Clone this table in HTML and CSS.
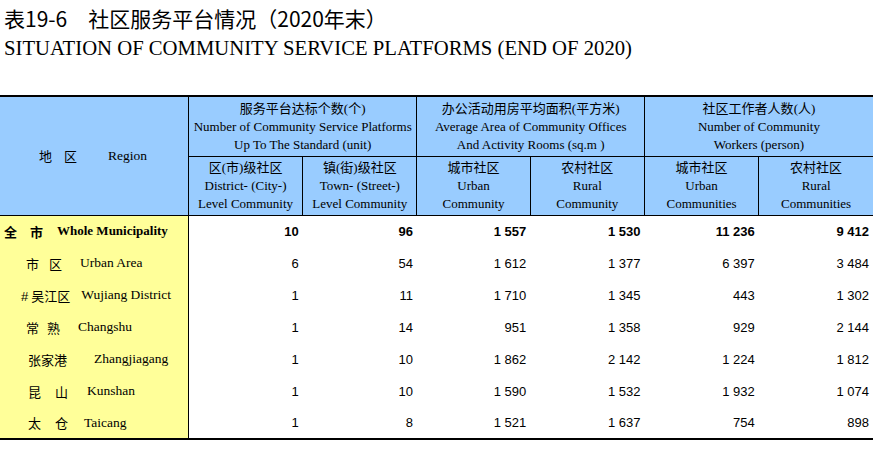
FILE: index.html
```html
<!DOCTYPE html>
<html lang="zh-CN">
<head>
<meta charset="utf-8">
<title>表19-6 社区服务平台情况</title>
<link rel="stylesheet" href="styles.css">
</head>
<body>
<h1 class="title-cn">表19-6　社区服务平台情况（2020年末）</h1>
<h2 class="title-en">SITUATION OF COMMUNITY SERVICE PLATFORMS (END OF 2020)</h2>
<table class="stat">
  <colgroup>
    <col class="c-region">
    <col class="c-num"><col class="c-num">
    <col class="c-num2"><col class="c-num">
    <col class="c-num"><col class="c-num">
  </colgroup>
  <thead>
    <tr class="h1">
      <th rowspan="2" class="h-region"><div class="lbl"><span class="cn j w-di">地 区</span><span class="en en-region">Region</span></div></th>
      <th colspan="2"><span class="zh">服务平台达标个数<span class="lat">(</span>个<span class="lat">)</span></span><br>Number of Community Service Platforms<br>Up To The Standard (unit)</th>
      <th colspan="2"><span class="zh">办公活动用房平均面积<span class="lat">(</span>平方米<span class="lat">)</span></span><br>Average Area of Community Offices<br>And Activity Rooms (sq.m )</th>
      <th colspan="2"><span class="zh">社区工作者人数<span class="lat">(</span>人<span class="lat">)</span></span><br>Number of Community<br>Workers (person)</th>
    </tr>
    <tr class="h2">
      <th><span class="zh">区<span class="lat">(</span>市<span class="lat">)</span>级社区</span><br>District- (City-)<br>Level Community</th>
      <th><span class="zh">镇<span class="lat">(</span>街<span class="lat">)</span>级社区</span><br>Town- (Street-)<br>Level Community</th>
      <th><span class="zh">城市社区</span><br>Urban<br>Community</th>
      <th><span class="zh">农村社区</span><br>Rural<br>Community</th>
      <th><span class="zh">城市社区</span><br>Urban<br>Communities</th>
      <th><span class="zh">农村社区</span><br>Rural<br>Communities</th>
    </tr>
  </thead>
  <tbody>
    <tr class="total">
      <td class="region"><div class="lbl"><span class="cn j l-all">全 市</span><span class="en e-all">Whole Municipality</span></div></td>
      <td>10</td><td>96</td><td>1 557</td><td>1 530</td><td>11 236</td><td>9 412</td>
    </tr>
    <tr>
      <td class="region"><div class="lbl"><span class="cn j l-sq">市 区</span><span class="en e-80">Urban Area</span></div></td>
      <td>6</td><td>54</td><td>1 612</td><td>1 377</td><td>6 397</td><td>3 484</td>
    </tr>
    <tr>
      <td class="region"><div class="lbl"><span class="cn l-wj"><span class="hash">#</span>吴江区</span><span class="en e-wj">Wujiang District</span></div></td>
      <td>1</td><td>11</td><td>1 710</td><td>1 345</td><td>443</td><td>1 302</td>
    </tr>
    <tr>
      <td class="region"><div class="lbl"><span class="cn j l-cs">常 熟</span><span class="en e-80">Changshu</span></div></td>
      <td>1</td><td>14</td><td>951</td><td>1 358</td><td>929</td><td>2 144</td>
    </tr>
    <tr>
      <td class="region"><div class="lbl"><span class="cn l-zjg">张家港</span><span class="en e-zjg">Zhangjiagang</span></div></td>
      <td>1</td><td>10</td><td>1 862</td><td>2 142</td><td>1 224</td><td>1 812</td>
    </tr>
    <tr>
      <td class="region"><div class="lbl"><span class="cn j l-ks">昆 山</span><span class="en e-ks">Kunshan</span></div></td>
      <td>1</td><td>10</td><td>1 590</td><td>1 532</td><td>1 932</td><td>1 074</td>
    </tr>
    <tr>
      <td class="region"><div class="lbl"><span class="cn j l-tc">太 仓</span><span class="en e-tc">Taicang</span></div></td>
      <td>1</td><td>8</td><td>1 521</td><td>1 637</td><td>754</td><td>898</td>
    </tr>
  </tbody>
</table>
</body>
</html>
```
FILE: styles.css
```css
html, body {
  margin: 0;
  padding: 0;
  background: #ffffff;
  color: #000000;
}

.title-cn {
  margin: 4px 0 0 4px;
  font-family: "Noto Sans CJK SC", sans-serif;
  font-weight: normal;
  font-size: 21px;
  line-height: 28px;
}

.title-en {
  margin: 4px 0 0 4px;
  font-family: "Liberation Serif", serif;
  font-weight: normal;
  font-size: 20.7px;
  line-height: 24px;
}

.stat {
  margin-top: 35px;
  width: 873px;
  table-layout: fixed;
  border-collapse: collapse;
  border-top: 2px solid #000;
  border-bottom: 2px solid #000;
}

.c-region { width: 188px; }
.c-num { width: 114px; }
.c-num2 { width: 113px; }

.stat th {
  background: #99ccff;
  font-family: "Liberation Serif", serif;
  font-weight: normal;
  font-size: 13px;
  line-height: 18px;
  text-align: center;
  vertical-align: middle;
  padding: 0;
  border: 1px solid #000;
  border-top: none;
}

.stat th:first-child { border-left: none; }
.stat tr.h1 th:last-child,
.stat tr.h2 th:last-child { border-right: none; }

.zh {
  font-family: "Noto Sans CJK SC", sans-serif;
  font-size: 13px;
}

.lat {
  font-family: "Liberation Serif", serif;
}

.h1 { height: 60px; }
.h2 { height: 59px; }

.stat tbody tr { height: 32px; }

.stat td {
  padding: 0 4px 0 0;
  font-family: "Liberation Sans", Arial, sans-serif;
  font-size: 13px;
  text-align: right;
  vertical-align: middle;
}

.stat tr.total td { font-weight: bold; }

.stat td.region {
  background: #ffff99;
  border-right: 1px solid #000;
  text-align: left;
  padding: 0;
}

.lbl {
  display: flex;
  align-items: center;
  white-space: nowrap;
}

.cn {
  font-family: "Noto Sans CJK SC", sans-serif;
  font-size: 13px;
  display: inline-block;
}

.j {
  text-align: justify;
  text-align-last: justify;
}

.en {
  font-family: "Liberation Serif", serif;
  font-size: 13.5px;
}

.w-di { width: 38px; margin-left: 39px; }
.en-region { margin-left: 31px; }

.l-all { width: 39px; margin-left: 4px; }
.e-all { margin-left: 14px; font-size: 13px; }

.l-sq { width: 36px; margin-left: 26px; }
.e-80 { margin-left: 18px; }

.l-wj { margin-left: 21px; }
.hash { font-family: "Liberation Sans", sans-serif; margin-right: 3px; }
.e-wj { margin-left: 11px; }

.l-cs { width: 34px; margin-left: 26px; }

.l-zjg { margin-left: 28px; }
.e-zjg { margin-left: 27px; }

.l-ks { width: 40px; margin-left: 28px; }
.e-ks { margin-left: 19px; }

.l-tc { width: 40px; margin-left: 28px; }
.e-tc { margin-left: 16px; }
```
